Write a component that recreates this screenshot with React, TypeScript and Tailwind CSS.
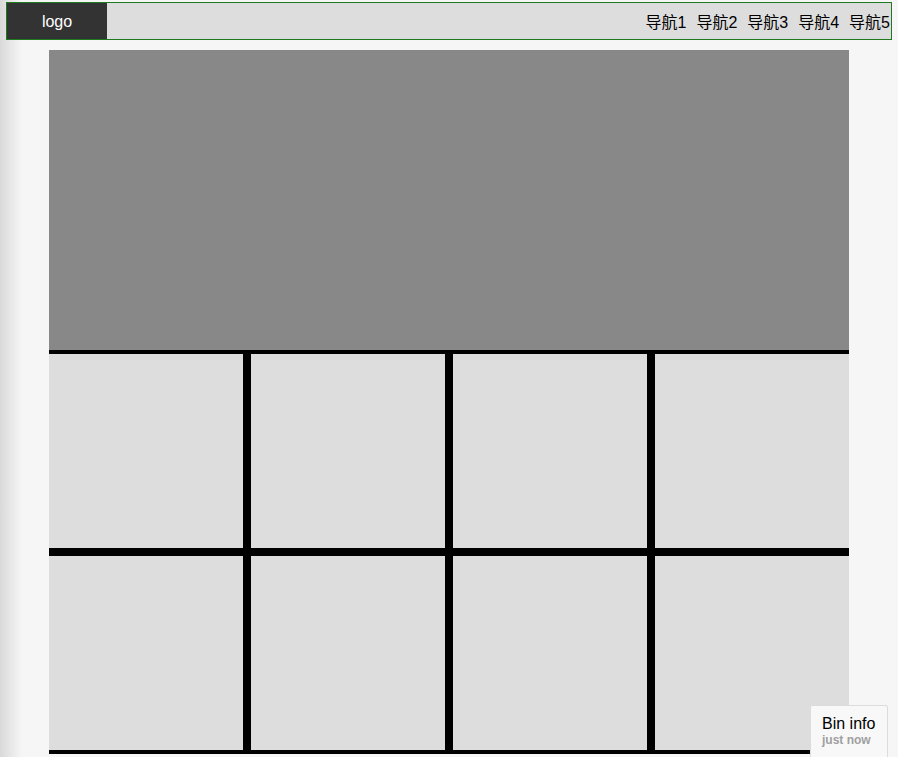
import React from "react";

export default function App() {
  const navs = ["导航1", "导航2", "导航3", "导航4", "导航5"];
  const cells = Array.from({ length: 8 });
  return (
    <div
      className="relative min-h-[757px] h-[757px] overflow-hidden bg-[#f6f6f6] text-black"
      style={{ fontFamily: '"Liberation Sans", Arial, "Noto Sans CJK SC", sans-serif' }}
    >
      <div className="pointer-events-none absolute left-0 top-0 h-full w-[22px] bg-gradient-to-r from-[#d9d9d9] to-[#f6f6f6]" />
      <header className="relative mx-[6px] mt-[2px] flex h-[38px] w-[886px] items-center border border-[#1f7a1f] bg-[#dddddd]">
        <div className="flex h-full w-[100px] items-center justify-center bg-[#333333] pt-[2px] text-[16px] text-white">
          logo
        </div>
        <nav className="ml-auto flex items-center gap-[10px] pr-[1px] pt-[4px] text-[16px] leading-none">
          {navs.map((n) => (
            <span key={n}>{n}</span>
          ))}
        </nav>
      </header>
      <main className="relative ml-[49px] mt-[10px] w-[800px]">
        <div className="h-[300px] bg-[#888888]" />
        <div className="overflow-hidden">
          <div className="ml-[-4px] flex w-[808px] flex-wrap">
            {cells.map((_, i) => (
              <div key={i} className="h-[202px] w-[202px] border-4 border-black bg-[#dddddd]" />
            ))}
          </div>
        </div>
      </main>
      <div className="absolute right-[10px] top-[705px] h-[60px] w-[78px] rounded-[2px] border border-[#dcdcdc] bg-[#f8f8f8] px-[11px] pt-[9px]">
        <div className="text-[16px] leading-[18px] text-black">Bin info</div>
        <div className="text-[12px] font-bold leading-[14px] text-[#a0a0a0]">just now</div>
      </div>
    </div>
  );
}
